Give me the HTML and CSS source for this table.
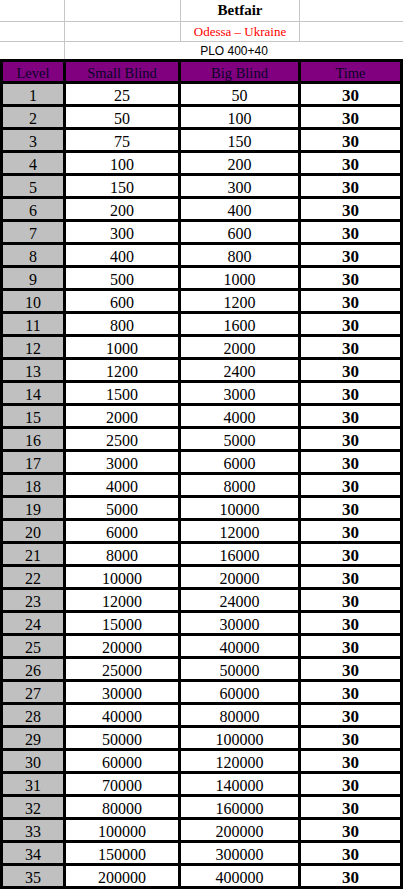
FILE: index.html
```html
<!DOCTYPE html>
<html>
<head>
<meta charset="utf-8">
<link rel="stylesheet" href="styles.css">
</head>
<body>
<div class="sheet">
  <div class="title-grid">
    <div class="tc"></div><div class="tc"></div><div class="tc title">Betfair</div><div class="tc"></div>
    <div class="tc"></div><div class="tc"></div><div class="tc venue">Odessa – Ukraine</div><div class="tc"></div>
    <div class="tc"></div><div class="tc game">PLO 400+40</div>
  </div>
  <div class="blinds">
    <div class="hd"><span class="hd-text">Level</span></div><div class="hd"><span class="hd-text">Small Blind</span></div><div class="hd"><span class="hd-text">Big Blind</span></div><div class="hd"><span class="hd-text">Time</span></div>
    <div class="lv">1</div><div class="c">25</div><div class="c">50</div><div class="c t">30</div>
    <div class="lv">2</div><div class="c">50</div><div class="c">100</div><div class="c t">30</div>
    <div class="lv">3</div><div class="c">75</div><div class="c">150</div><div class="c t">30</div>
    <div class="lv">4</div><div class="c">100</div><div class="c">200</div><div class="c t">30</div>
    <div class="lv">5</div><div class="c">150</div><div class="c">300</div><div class="c t">30</div>
    <div class="lv">6</div><div class="c">200</div><div class="c">400</div><div class="c t">30</div>
    <div class="lv">7</div><div class="c">300</div><div class="c">600</div><div class="c t">30</div>
    <div class="lv">8</div><div class="c">400</div><div class="c">800</div><div class="c t">30</div>
    <div class="lv">9</div><div class="c">500</div><div class="c">1000</div><div class="c t">30</div>
    <div class="lv">10</div><div class="c">600</div><div class="c">1200</div><div class="c t">30</div>
    <div class="lv">11</div><div class="c">800</div><div class="c">1600</div><div class="c t">30</div>
    <div class="lv">12</div><div class="c">1000</div><div class="c">2000</div><div class="c t">30</div>
    <div class="lv">13</div><div class="c">1200</div><div class="c">2400</div><div class="c t">30</div>
    <div class="lv">14</div><div class="c">1500</div><div class="c">3000</div><div class="c t">30</div>
    <div class="lv">15</div><div class="c">2000</div><div class="c">4000</div><div class="c t">30</div>
    <div class="lv">16</div><div class="c">2500</div><div class="c">5000</div><div class="c t">30</div>
    <div class="lv">17</div><div class="c">3000</div><div class="c">6000</div><div class="c t">30</div>
    <div class="lv">18</div><div class="c">4000</div><div class="c">8000</div><div class="c t">30</div>
    <div class="lv">19</div><div class="c">5000</div><div class="c">10000</div><div class="c t">30</div>
    <div class="lv">20</div><div class="c">6000</div><div class="c">12000</div><div class="c t">30</div>
    <div class="lv">21</div><div class="c">8000</div><div class="c">16000</div><div class="c t">30</div>
    <div class="lv">22</div><div class="c">10000</div><div class="c">20000</div><div class="c t">30</div>
    <div class="lv">23</div><div class="c">12000</div><div class="c">24000</div><div class="c t">30</div>
    <div class="lv">24</div><div class="c">15000</div><div class="c">30000</div><div class="c t">30</div>
    <div class="lv">25</div><div class="c">20000</div><div class="c">40000</div><div class="c t">30</div>
    <div class="lv">26</div><div class="c">25000</div><div class="c">50000</div><div class="c t">30</div>
    <div class="lv">27</div><div class="c">30000</div><div class="c">60000</div><div class="c t">30</div>
    <div class="lv">28</div><div class="c">40000</div><div class="c">80000</div><div class="c t">30</div>
    <div class="lv">29</div><div class="c">50000</div><div class="c">100000</div><div class="c t">30</div>
    <div class="lv">30</div><div class="c">60000</div><div class="c">120000</div><div class="c t">30</div>
    <div class="lv">31</div><div class="c">70000</div><div class="c">140000</div><div class="c t">30</div>
    <div class="lv">32</div><div class="c">80000</div><div class="c">160000</div><div class="c t">30</div>
    <div class="lv">33</div><div class="c">100000</div><div class="c">200000</div><div class="c t">30</div>
    <div class="lv">34</div><div class="c">150000</div><div class="c">300000</div><div class="c t">30</div>
    <div class="lv">35</div><div class="c">200000</div><div class="c">400000</div><div class="c t">30</div>
  </div>
</div>
</body>
</html>
```

FILE: styles.css
```css
html, body {
  margin: 0;
  padding: 0;
  background: #ffffff;
}

.sheet {
  width: 403px;
  font-family: "Liberation Serif", "Times New Roman", serif;
  color: #000000;
}

.title-grid {
  display: grid;
  grid-template-columns: 64px 115px 118px 103px;
  grid-template-rows: 21px 19px 17px;
  gap: 1px;
  background: #c6c6c6;
}

.tc {
  background: #ffffff;
  display: flex;
  align-items: flex-end;
  justify-content: center;
}

.title {
  font-weight: bold;
  font-size: 15px;
  line-height: 15px;
  padding-bottom: 3px;
  box-sizing: border-box;
}

.venue {
  color: #ff0000;
  font-size: 13px;
  line-height: 13px;
  padding-bottom: 3px;
  box-sizing: border-box;
}

.game {
  grid-column: 2 / 5;
  font-family: "Liberation Sans", Arial, sans-serif;
  font-size: 12px;
  line-height: 12px;
  padding-bottom: 2px;
  box-sizing: border-box;
}

.blinds {
  display: grid;
  grid-template-columns: 60px 112px 117px 99px;
  grid-template-rows: 19px;
  grid-auto-rows: 20px;
  gap: 3px;
  padding: 3px;
  background: #000000;
}

.blinds > div {
  display: flex;
  align-items: flex-end;
  justify-content: center;
  overflow: hidden;
}

.hd {
  background: #800080;
  font-size: 14.5px;
  line-height: 15px;
}

.hd-text {
  color: #0a0428;
}

.lv {
  background: #c0c0c0;
  font-size: 16px;
  line-height: 16px;
}

.c {
  background: #ffffff;
  font-size: 16px;
  line-height: 16px;
}

.t {
  font-weight: bold;
  font-size: 17px;
}
```
